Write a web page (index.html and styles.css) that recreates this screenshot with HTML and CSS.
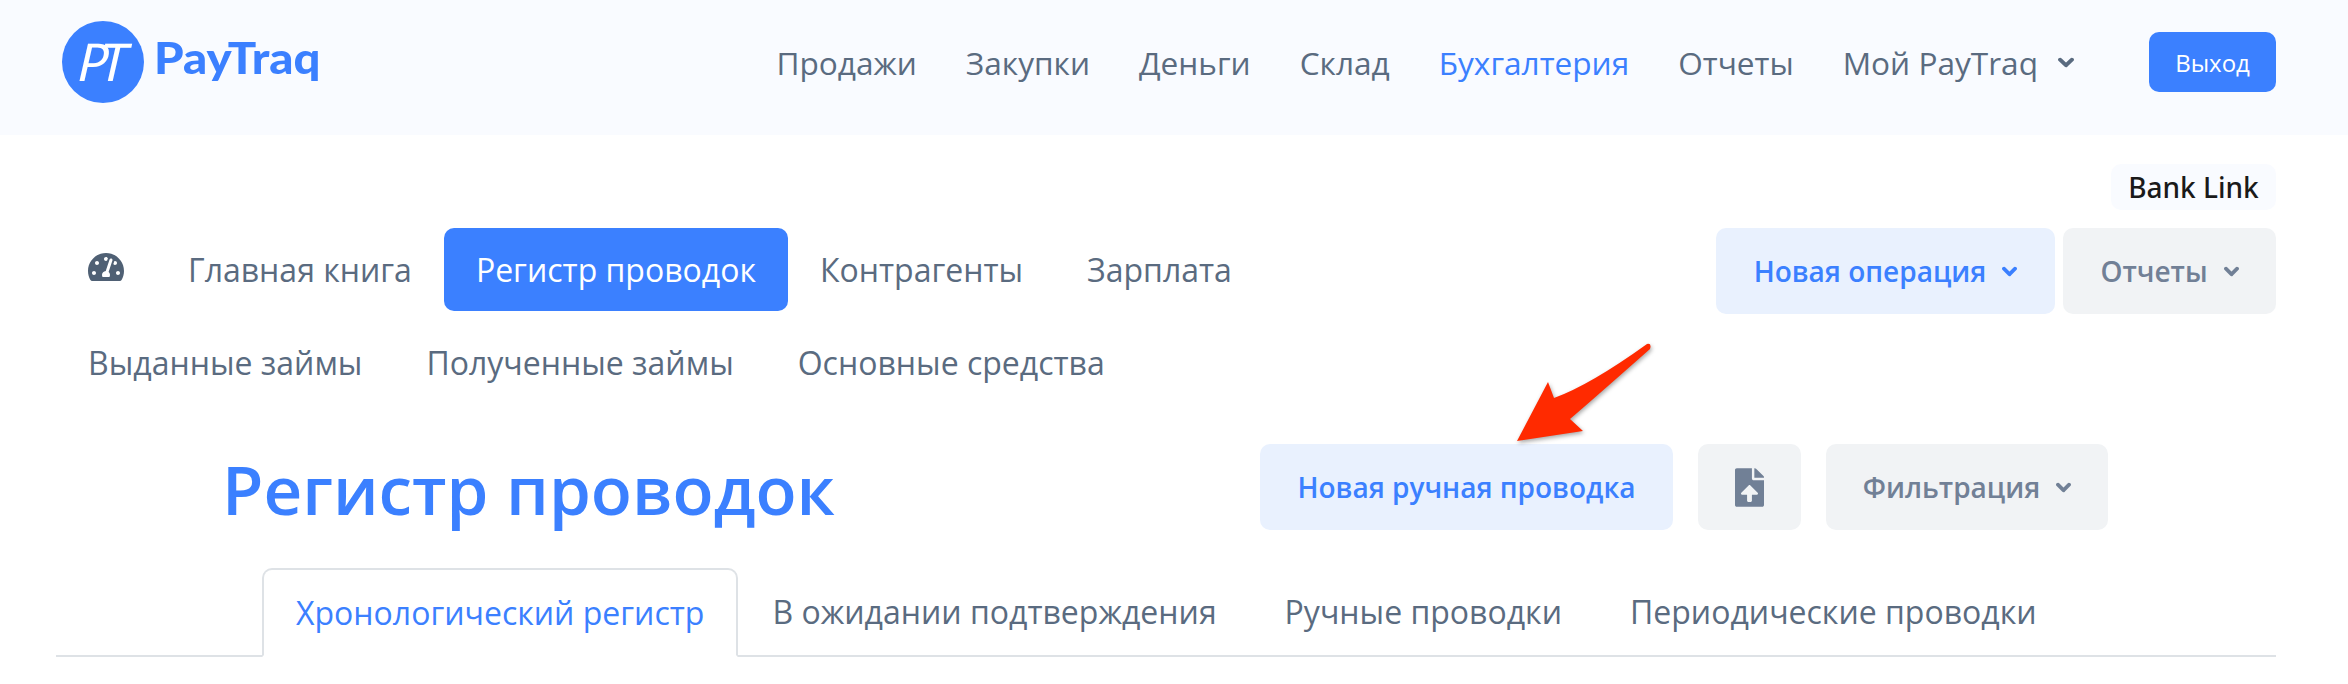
FILE: index.html
```html
<!DOCTYPE html>
<html lang="ru">
<head>
<meta charset="utf-8">
<title>PayTraq</title>
<link rel="stylesheet" href="styles.css">
</head>
<body>
<svg class="defs" width="0" height="0" aria-hidden="true">
  <symbol id="chev" viewBox="0 0 16 12" preserveAspectRatio="none"><path d="M2.2 3 L8 9 L13.8 3" fill="none" stroke="currentColor" stroke-width="4.2" stroke-linecap="round" stroke-linejoin="round"/></symbol>
</svg>
<header class="topbar">
  <a class="logo">
    <span class="logo-mark"><span class="logo-pt">PT</span></span>
    <span class="logo-word">PayTraq</span>
  </a>
  <nav class="mainnav">
    <a>Продажи</a>
    <a>Закупки</a>
    <a>Деньги</a>
    <a>Склад</a>
    <a class="current">Бухгалтерия</a>
    <a>Отчеты</a>
    <a class="with-chev">Мой PayTraq <svg class="chev nav-chev"><use href="#chev"/></svg></a>
    <a class="logout">Выход</a>
  </nav>
</header>
<main class="content">
  <div class="bank-row"><a class="bank-link">Bank Link</a></div>
  <div class="sub-row">
    <nav class="subnav">
      <a class="gauge-link"><svg class="gauge" viewBox="0 32 576 448"><path d="M288 32C128.94 32 0 160.94 0 320c0 52.8 14.25 102.26 39.06 144.8 5.61 9.62 16.3 15.2 27.44 15.2h443c11.14 0 21.83-5.58 27.44-15.2C561.75 422.26 576 372.8 576 320c0-159.06-128.94-288-288-288zm0 64c14.71 0 26.58 10.13 30.32 23.65-1.11 2.26-2.64 4.23-3.45 6.67l-9.22 27.67c-5.13 3.49-10.97 6.01-17.64 6.01-17.67 0-32-14.33-32-32S270.33 96 288 96zM96 384c-17.67 0-32-14.33-32-32s14.33-32 32-32 32 14.33 32 32-14.33 32-32 32zm48-160c-17.67 0-32-14.33-32-32s14.33-32 32-32 32 14.33 32 32-14.33 32-32 32zm246.77-72.41l-61.33 184C343.13 347.33 352 364.54 352 384c0 11.72-3.38 22.55-8.88 32H232.88c-5.5-9.45-8.88-20.28-8.88-32 0-33.94 26.5-61.43 59.9-63.59l61.34-184.01c4.17-12.56 17.73-19.45 30.36-15.17 12.57 4.19 19.35 17.77 15.17 30.36zm14.66 57.2l15.52-46.55c3.47-1.29 7.13-2.23 11.05-2.23 17.67 0 32 14.33 32 32s-14.33 32-32 32c-11.38-.01-20.89-6.28-26.57-15.22zM480 384c-17.67 0-32-14.33-32-32s14.33-32 32-32 32 14.33 32 32-14.33 32-32 32z"/></svg></a>
      <a>Главная книга</a>
      <a class="active">Регистр проводок</a>
      <a>Контрагенты</a>
      <a>Зарплата</a>
      <span class="break"></span>
      <a>Выданные займы</a>
      <a>Полученные займы</a>
      <a>Основные средства</a>
    </nav>
    <div class="actions tight">
      <a class="btn btn-blue new-op">Новая операция <svg class="chev"><use href="#chev"/></svg></a>
      <a class="btn btn-gray reports">Отчеты <svg class="chev"><use href="#chev"/></svg></a>
    </div>
  </div>
  <div class="title-row">
    <h1>Регистр проводок</h1>
    <div class="actions">
      <a class="btn btn-blue new-entry">Новая ручная проводка</a>
      <a class="btn btn-gray upload"><svg class="upload-icon" viewBox="0 0 384 512"><path d="M224 136V0H24C10.7 0 0 10.7 0 24v464c0 13.3 10.7 24 24 24h336c13.3 0 24-10.7 24-24V160H248c-13.2 0-24-10.8-24-24zm65.18 216.01H224v80c0 8.84-7.16 16-16 16h-32c-8.84 0-16-7.16-16-16v-80H94.82c-14.28 0-21.41-17.29-11.27-27.36l96.42-95.7c6.65-6.61 17.39-6.61 24.04 0l96.42 95.7c10.15 10.07 3.03 27.36-11.25 27.36zM377 105L279.1 7c-4.5-4.5-10.6-7-17-7H256v128h128v-6.1c0-6.3-2.5-12.4-7-16.9z"/></svg></a>
      <a class="btn btn-gray filter">Фильтрация <svg class="chev"><use href="#chev"/></svg></a>
    </div>
  </div>
  <div class="tabs">
    <a class="tab tab-active">Хронологический регистр</a>
    <a class="tab">В ожидании подтверждения</a>
    <a class="tab">Ручные проводки</a>
    <a class="tab">Периодические проводки</a>
  </div>
</main>
<svg class="arrow" viewBox="0 0 150 110" aria-hidden="true"><path d="M7 101 L38 42 L44 58 Q80 45 137 4 Q142 3 140 9 Q80 62 60 79 L73 91 Z"/></svg>
</body>
</html>
```
FILE: styles.css
```css
* { box-sizing: border-box; }
html, body { margin: 0; padding: 0; background: #fff; }
body {
  position: relative;
  font-family: "Open Sans", "Noto Sans", sans-serif;
  font-size: 32px;
  color: #5a6b80;
  overflow: hidden;
  height: 684px;
}
.defs { position: absolute; }
a { display: inline-flex; align-items: center; }

.topbar {
  height: 135px;
  background: #f9fbff;
  display: flex;
  align-items: center;
  justify-content: space-between;
  padding: 0 72px 11px 62px;
}
.logo { gap: 10px; }
.logo-mark {
  width: 82px;
  height: 82px;
  border-radius: 50%;
  background: #3b80ff;
  display: flex;
  align-items: center;
  justify-content: center;
}
.logo-pt {
  font-family: "Lato", sans-serif;
  font-style: italic;
  font-weight: 400;
  color: #fff;
  font-size: 52px;
  line-height: 1;
  letter-spacing: -8px;
  transform: translate(-3px, -1px) skewX(-6deg);
}
.logo-word {
  font-family: "Lato", sans-serif;
  font-weight: 900;
  font-size: 43px;
  color: #3b80ff;
  line-height: 1;
  margin-bottom: 9px;
  transform: scaleX(1.1);
  transform-origin: left center;
}
.mainnav { display: flex; align-items: center; gap: 49px; font-size: 31.6px; }
.mainnav a { color: #5a6b80; }
.mainnav .current { color: #3b80ff; }
.chev { width: 15px; height: 11px; margin-left: 16px; }
.nav-chev { width: 16px; margin-left: 20px; }
.mainnav .logout {
  height: 60px;
  width: 127px;
  margin-left: 26px;
  justify-content: center;
  background: #3b80ff;
  color: #fff;
  border-radius: 10px;
  font-size: 24px;
}

.content { padding: 29px 72px 0 56px; }
.bank-row { display: flex; justify-content: flex-end; }
.bank-link {
  height: 46px;
  width: 165px;
  justify-content: center;
  border-radius: 10px;
  background: #f9fbff;
  color: #1a1a1a;
  font-family: "Noto Sans", sans-serif;
  font-size: 28px;
  font-weight: 500;
}
.sub-row {
  margin-top: 18px;
  display: flex;
  justify-content: space-between;
  align-items: flex-start;
}
.subnav { display: flex; flex-wrap: wrap; row-gap: 5px; width: 1300px; }
.subnav a { height: 83px; padding: 0 32px; border-radius: 10px; }
.subnav .active { background: #3b80ff; color: #fff; }
.break { flex-basis: 100%; height: 0; }
.gauge { width: 36px; height: 28px; fill: #4f6074; }
.subnav .gauge-link { padding-bottom: 6px; }

.actions { display: flex; gap: 25px; }
.actions.tight { gap: 8px; }
.btn {
  height: 86px;
  justify-content: center;
  border-radius: 10px;
  font-size: 28px;
  font-weight: 600;
}
.btn-blue { background: #e9f1fe; color: #3b80ff; }
.btn-gray { background: #f1f3f5; color: #718096; }
.new-op { width: 339px; }
.reports { width: 213px; }
.new-entry { width: 413px; }
.upload { width: 103px; }
.filter { width: 282px; }
.upload-icon { width: 29px; height: 39px; fill: #718096; }

.title-row {
  margin-top: 40px;
  padding: 0 168px 0 166px;
  display: flex;
  justify-content: space-between;
  align-items: center;
}
h1 {
  margin: 5px 0 0;
  color: #3b80ff;
  font-size: 67.4px;
  font-weight: 600;
  line-height: 81px;
}

.tabs {
  margin-top: 38px;
  padding-left: 206px;
  display: flex;
  border-bottom: 2px solid #dee2e6;
}
.tab {
  height: 87px;
  padding: 0 34px;
}
.tab-active {
  height: 89px;
  margin-bottom: -2px;
  padding: 0 32px;
  color: #3b80ff;
  background: #fff;
  border: 2px solid #dee2e6;
  border-bottom-color: #fff;
  border-radius: 10px 10px 0 0;
}

.arrow {
  position: absolute;
  left: 1510px;
  top: 340px;
  width: 150px;
  height: 110px;
  fill: #ff2a00;
  filter: drop-shadow(1px 2px 2px rgba(0,0,0,.35));
}
```
